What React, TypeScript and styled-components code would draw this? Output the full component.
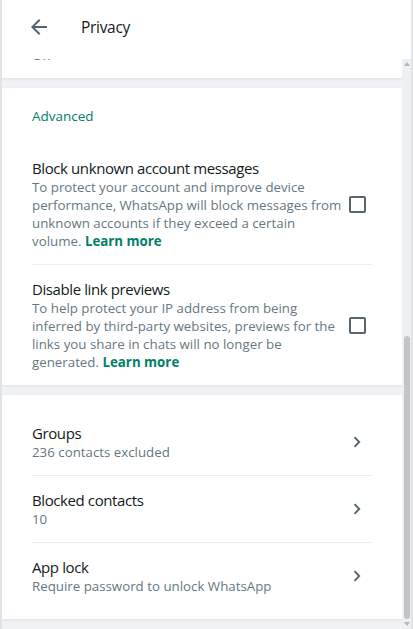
import React, { useLayoutEffect, useRef, useState } from "react";
import styled, { createGlobalStyle } from "styled-components";

const GlobalStyle = createGlobalStyle`
  html, body {
    margin: 0;
    padding: 0;
    background: #ffffff;
  }
  body {
    font-family: "Open Sans", "Noto Sans", "Liberation Sans", sans-serif;
    -webkit-font-smoothing: antialiased;
  }
  * { box-sizing: border-box; }
`;

const Panel = styled.div`
  width: 413px;
  height: 629px;
  display: flex;
  flex-direction: column;
  background: #ffffff;
  border-left: 2px solid #e1e4e7;
  border-right: 2px solid #e1e4e7;
`;

const Header = styled.header`
  height: 59px;
  flex-shrink: 0;
  display: flex;
  align-items: center;
  padding: 0 0 6px 23px;
  background: #ffffff;
`;

const BackButton = styled.button`
  width: 28px;
  height: 28px;
  padding: 0;
  border: 0;
  background: transparent;
  display: flex;
  align-items: center;
  justify-content: center;
  color: #54656f;
  cursor: pointer;
  margin-right: 28px;
`;

const Title = styled.h1`
  margin: 0;
  font-size: 15.5px;
  font-weight: 400;
  letter-spacing: -0.3px;
  color: #111b21;
`;

const Body = styled.div`
  flex: 1;
  min-height: 0;
  display: flex;
`;

const Viewport = styled.div`
  flex: 1;
  min-width: 0;
  overflow-y: auto;
  scrollbar-width: none;
  background: #f0f2f5;
`;

/* Scrollbar drawn beside the viewport: arrow, track with thumb, arrow */
const ScrollTrack = styled.div`
  width: 9px;
  flex-shrink: 0;
  display: flex;
  flex-direction: column;
  background: #eef0f2;
`;

const ScrollArrow = styled.div<{ $dir: "up" | "down" }>`
  height: 10px;
  flex-shrink: 0;
  display: flex;
  align-items: center;
  justify-content: center;

  &::before {
    content: "";
    width: 0;
    height: 0;
    border-left: 3.5px solid transparent;
    border-right: 3.5px solid transparent;
    ${(p) =>
      p.$dir === "up"
        ? "border-bottom: 4px solid #b4b8bc;"
        : "border-top: 4px solid #b4b8bc;"}
  }
`;

const ThumbArea = styled.div`
  flex: 1;
  display: flex;
  flex-direction: column;
  justify-content: flex-end;
  align-items: center;
`;

const Thumb = styled.div`
  width: 6px;
  border-radius: 3px;
  background: #c1c5c9;
`;

const Section = styled.section<{ $top?: number; $bottom?: number }>`
  background: #ffffff;
  margin-bottom: 10px;
  padding: ${(p) => p.$top ?? 0}px 30px ${(p) => p.$bottom ?? 0}px 30px;
  box-shadow: 0 1px 3px rgba(11, 20, 26, 0.08);
`;

const SectionHeading = styled.div`
  padding: 18px 0 18px;
  font-size: 13.5px;
  line-height: 20px;
  color: #008069;
`;

const Row = styled.div<{ $clickable?: boolean }>`
  display: flex;
  align-items: center;
  gap: 6px;
  padding: 14px 0;
  cursor: ${(p) => (p.$clickable ? "pointer" : "default")};

  & + & {
    border-top: 1px solid #e9edef;
  }
`;

const RowText = styled.div`
  flex: 1;
  min-width: 0;
`;

const RowTitle = styled.div`
  font-size: 15px;
  line-height: 20px;
  letter-spacing: -0.4px;
  color: #111b21;
`;

const RowSub = styled.div`
  font-size: 13.3px;
  line-height: 18px;
  color: #667781;
`;

const LearnMore = styled.a`
  color: #008069;
  font-weight: 700;
  text-decoration: none;
`;

const Checkbox = styled.span`
  flex-shrink: 0;
  width: 17px;
  height: 17px;
  margin-right: 6px;
  border: 2px solid #54656f;
  border-radius: 2px;
`;

const Chevron = styled.span`
  flex-shrink: 0;
  width: 8px;
  margin-right: 11px;
  display: flex;
  color: #54656f;
`;

const BackArrow = () => (
  <svg width="24" height="24" viewBox="0 0 24 24" aria-hidden>
    <path
      fill="currentColor"
      d="M12 4l1.4 1.4L7.8 11H20v2H7.8l5.6 5.6L12 20l-8-8 8-8z"
    />
  </svg>
);

const ChevronIcon = () => (
  <svg width="8" height="12" viewBox="0 0 8 12" aria-hidden>
    <path
      d="M1.5 1.2 6.2 6l-4.7 4.8"
      fill="none"
      stroke="currentColor"
      strokeWidth="1.9"
    />
  </svg>
);

type NavItem = { title: string; sub: string };

const personalInfo: NavItem[] = [
  { title: "Last seen and online", sub: "Nobody" },
  { title: "Profile photo", sub: "My contacts" },
  { title: "About", sub: "Everyone" },
  { title: "Status", sub: "My contacts" },
];

const contacts: NavItem[] = [
  { title: "Groups", sub: "236 contacts excluded" },
  { title: "Blocked contacts", sub: "10" },
  { title: "App lock", sub: "Require password to unlock WhatsApp" },
];

const NavRow = ({ item }: { item: NavItem }) => (
  <Row $clickable>
    <RowText>
      <RowTitle>{item.title}</RowTitle>
      <RowSub>{item.sub}</RowSub>
    </RowText>
    <Chevron>
      <ChevronIcon />
    </Chevron>
  </Row>
);

export default function App() {
  const scrollRef = useRef<HTMLDivElement>(null);
  const [thumbRatio, setThumbRatio] = useState(0.5);

  useLayoutEffect(() => {
    const el = scrollRef.current;
    if (!el) return;
    el.scrollTop = el.scrollHeight;
    setThumbRatio(el.clientHeight / el.scrollHeight);
  }, []);

  return (
    <>
      <GlobalStyle />
      <Panel>
        <Header>
          <BackButton aria-label="Back">
            <BackArrow />
          </BackButton>
          <Title>Privacy</Title>
        </Header>
        <Body>
          <Viewport ref={scrollRef}>
            <Section>
              <SectionHeading>Who can see my personal info</SectionHeading>
              {personalInfo.map((item) => (
                <NavRow key={item.title} item={item} />
              ))}
              <Row>
                <RowText>
                  <RowTitle>Read receipts</RowTitle>
                  <RowSub>
                    If turned off, you won't send or receive Read receipts.
                    Read receipts are always sent for group chats.
                  </RowSub>
                </RowText>
                <Checkbox />
              </Row>
            </Section>

            <Section>
              <SectionHeading>Disappearing messages</SectionHeading>
              <NavRow item={{ title: "Default message timer", sub: "Off" }} />
            </Section>

            <Section>
              <SectionHeading>Advanced</SectionHeading>
              <Row>
                <RowText>
                  <RowTitle>Block unknown account messages</RowTitle>
                  <RowSub>
                    To protect your account and improve device performance,
                    WhatsApp will block messages from unknown accounts if they
                    exceed a certain volume.{" "}
                    <LearnMore href="#">Learn more</LearnMore>
                  </RowSub>
                </RowText>
                <Checkbox />
              </Row>
              <Row>
                <RowText>
                  <RowTitle>Disable link previews</RowTitle>
                  <RowSub>
                    To help protect your IP address from being inferred by
                    third-party websites, previews for the links you share in
                    chats will no longer be generated.{" "}
                    <LearnMore href="#">Learn more</LearnMore>
                  </RowSub>
                </RowText>
                <Checkbox />
              </Row>
            </Section>

            <Section $top={14} $bottom={10}>
              {contacts.map((item) => (
                <NavRow key={item.title} item={item} />
              ))}
            </Section>
          </Viewport>
          <ScrollTrack>
            <ScrollArrow $dir="up" />
            <ThumbArea>
              <Thumb style={{ height: `${thumbRatio * 100}%` }} />
            </ThumbArea>
            <ScrollArrow $dir="down" />
          </ScrollTrack>
        </Body>
      </Panel>
    </>
  );
}
